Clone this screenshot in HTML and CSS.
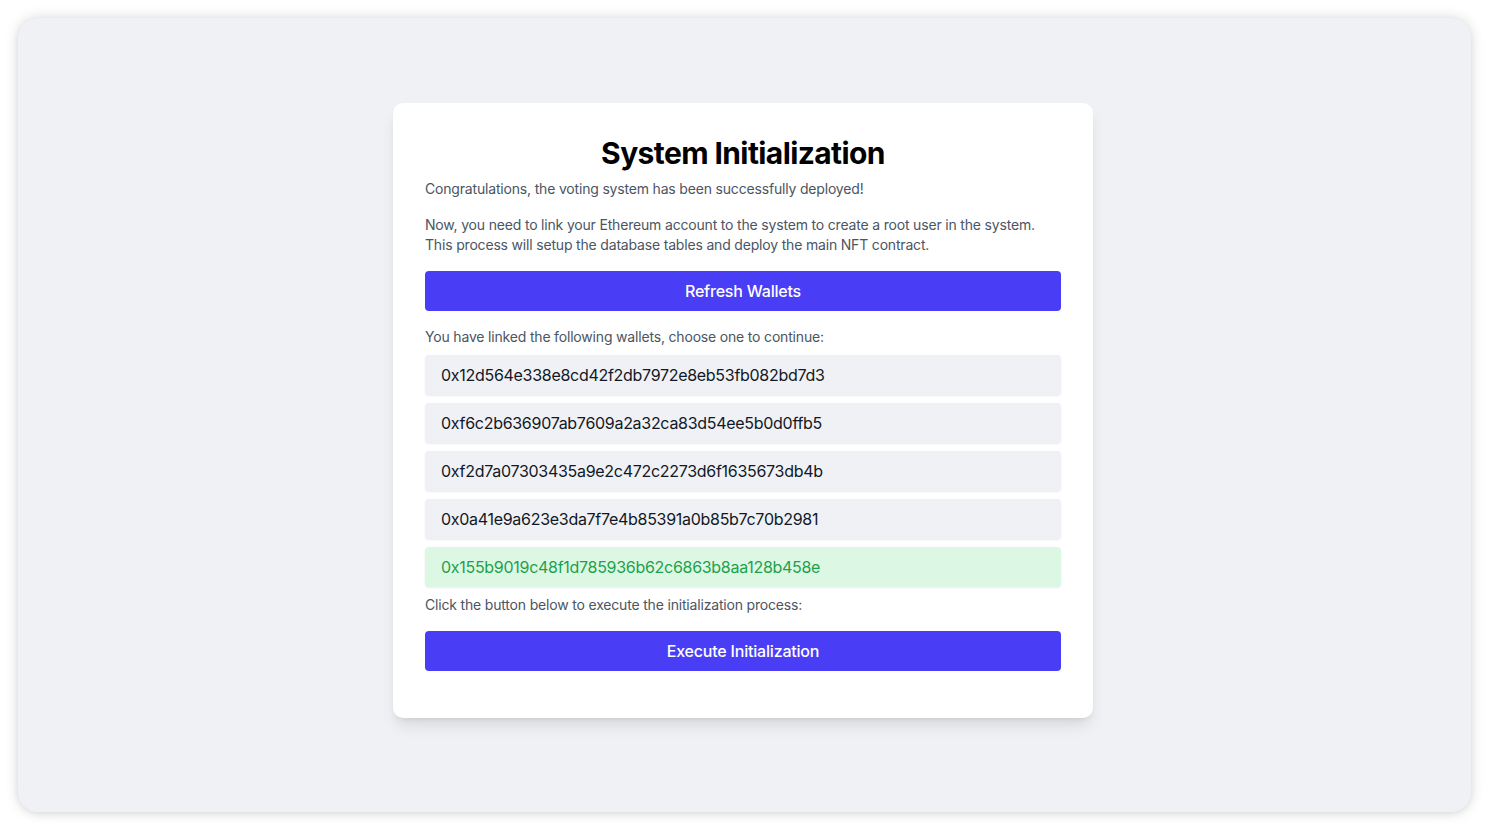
FILE: index.html
```html
<!DOCTYPE html>
<html lang="en">
<head>
<meta charset="utf-8">
<title>System Initialization</title>
<link rel="stylesheet" href="styles.css">
</head>
<body>
<div class="window">
  <main class="card">
    <h1 class="title">System Initialization</h1>
    <p class="text first">Congratulations, the voting system has been successfully deployed!</p>
    <p class="text">Now, you need to link your Ethereum account to the system to create a root user in the system.<br>This process will setup the database tables and deploy the main NFT contract.</p>
    <button class="btn">Refresh Wallets</button>
    <p class="text tight">You have linked the following wallets, choose one to continue:</p>
    <ul class="wallets">
      <li class="wallet">0x12d564e338e8cd42f2db7972e8eb53fb082bd7d3</li>
      <li class="wallet">0xf6c2b636907ab7609a2a32ca83d54ee5b0d0ffb5</li>
      <li class="wallet">0xf2d7a07303435a9e2c472c2273d6f1635673db4b</li>
      <li class="wallet">0x0a41e9a623e3da7f7e4b85391a0b85b7c70b2981</li>
      <li class="wallet selected">0x155b9019c48f1d785936b62c6863b8aa128b458e</li>
    </ul>
    <p class="text">Click the button below to execute the initialization process:</p>
    <button class="btn last">Execute Initialization</button>
  </main>
</div>
</body>
</html>
```

FILE: styles.css
```css
* { box-sizing: border-box; }
html, body { margin: 0; padding: 0; }
body {
  background: #ffffff;
  font-family: Inter, "Noto Sans", sans-serif;
  width: 1489px;
  height: 830px;
  padding: 18px;
}
.window {
  width: 1453px;
  height: 794px;
  background: #f0f1f5;
  border-radius: 20px;
  box-shadow: 0 0 14px rgba(0,0,0,0.15), 0 2px 6px rgba(0,0,0,0.06);
  display: flex;
  justify-content: center;
  align-items: flex-start;
  padding-top: 85px;
  padding-right: 3px;
}
.card {
  width: 700px;
  background: #ffffff;
  border-radius: 10px;
  box-shadow: 0 10px 15px -3px rgba(0,0,0,0.1), 0 4px 6px -4px rgba(0,0,0,0.1);
  padding: 32px 32px 47px;
  display: flex;
  flex-direction: column;
}
.title {
  margin: 0 0 8px;
  font-size: 30px;
  line-height: 36px;
  font-weight: 700;
  text-align: center;
  color: #000;
  letter-spacing: -0.6px;
}
.text {
  margin: 0 0 16px;
  font-size: 14px;
  line-height: 20px;
  color: #4b5563;
  letter-spacing: -0.18px;
}
.text.tight { margin-bottom: 8px; }
.btn {
  height: 40px;
  border: 0;
  border-radius: 4px;
  background: #493df6;
  color: #fff;
  font-family: inherit;
  font-size: 16px;
  font-weight: 500;
  letter-spacing: -0.2px;
  margin: 0 0 16px;
  cursor: pointer;
}
.btn.last { margin-bottom: 0; }
.wallets {
  list-style: none;
  margin: 0 0 8px;
  padding: 0;
  display: flex;
  flex-direction: column;
  gap: 8px;
}
.wallet {
  height: 40px;
  display: flex;
  align-items: center;
  padding-left: 16px;
  background: #f0f1f4;
  border-radius: 4px;
  box-shadow: 0 1px 2px rgba(0,0,0,0.08);
  font-size: 16px;
  color: #111827;
  letter-spacing: -0.29px;
}
.wallet.selected {
  background: #dcf8e4;
  color: #1ea14a;
}
```
